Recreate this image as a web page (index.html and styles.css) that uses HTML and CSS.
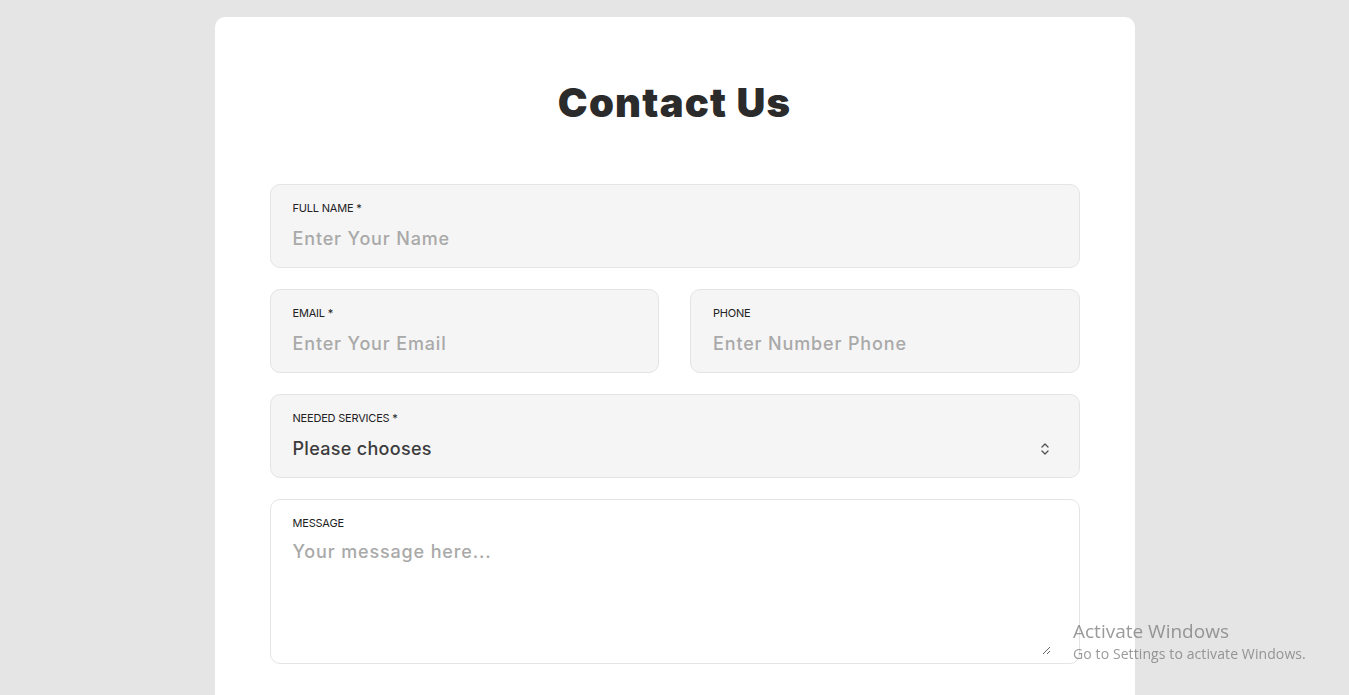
FILE: index.html
```html
<!DOCTYPE html>
<html lang="en">
<head>
<meta charset="utf-8">
<title>Contact Us</title>
<link rel="stylesheet" href="styles.css">
</head>
<body>
<main class="card">
  <h1 class="title">Contact Us</h1>
  <form class="form">
    <label class="field field-wide">
      <span class="field-label">FULL NAME *</span>
      <input class="field-input" type="text" placeholder="Enter Your Name">
    </label>
    <label class="field">
      <span class="field-label">EMAIL *</span>
      <input class="field-input" type="email" placeholder="Enter Your Email">
    </label>
    <label class="field">
      <span class="field-label">PHONE</span>
      <input class="field-input" type="tel" placeholder="Enter Number Phone">
    </label>
    <label class="field field-wide field-select">
      <span class="field-label">NEEDED SERVICES *</span>
      <span class="select-row">
        <span class="select-value">Please chooses</span>
        <svg class="select-icon" width="10" height="14" viewBox="0 0 10 14" fill="none" stroke="#555" stroke-width="1.4" stroke-linecap="round" stroke-linejoin="round"><path d="M2 5 L5 2 L8 5"/><path d="M2 9 L5 12 L8 9"/></svg>
      </span>
    </label>
    <label class="field field-wide field-message">
      <span class="field-label">MESSAGE</span>
      <textarea class="field-textarea" placeholder="Your message here..."></textarea>
    </label>
  </form>
</main>
<div class="activate">
  <div class="activate-title">Activate Windows</div>
  <div class="activate-sub">Go to Settings to activate Windows.</div>
</div>
</body>
</html>
```
FILE: styles.css
```css
* { box-sizing: border-box; }
html, body { height: 100%; }
body {
  margin: 0;
  background: #e5e5e5;
  padding-top: 17px;
  overflow: hidden;
  font-family: Inter, "Noto Sans", sans-serif;
}
.card {
  width: 920px;
  margin: 0 auto;
  background: #fff;
  border-radius: 10px;
  padding: 63px 55px 40px;
  min-height: 700px;
}
.title {
  margin: 0 0 58px;
  text-align: center;
  font-family: Inter, sans-serif;
  font-weight: 900;
  font-size: 40px;
  line-height: 46px;
  color: #2b2b2b;
  letter-spacing: 1.2px;
}
.form {
  display: grid;
  grid-template-columns: 1fr 1fr;
  column-gap: 31px;
  row-gap: 21px;
}
.field {
  display: flex;
  flex-direction: column;
  background: #f5f5f5;
  border: 1px solid #e4e4e4;
  border-radius: 10px;
  padding: 15px 22px 16px;
}
.field-wide { grid-column: 1 / -1; }
.field-label {
  font-size: 11px;
  line-height: 16px;
  font-weight: 400;
  color: #222;
  letter-spacing: -0.2px;
}
.field-input, .select-value, .field-textarea {
  font-family: Inter, sans-serif;
  font-size: 18px;
  line-height: 24px;
  font-weight: 500;
  letter-spacing: 0.85px;
}
.field-input {
  margin-top: 11px;
  border: 0;
  padding: 0;
  background: transparent;
  outline: none;
  color: #333;
  height: 24px;
}
.field-input::placeholder, .field-textarea::placeholder { color: #a9a9a9; }
.select-row {
  margin-top: 11px;
  display: flex;
  align-items: center;
  justify-content: space-between;
  padding-right: 7px;
}
.select-value { color: #3c3c3c; letter-spacing: 0.3px; }
.field-message {
  background: #fff;
  padding-bottom: 8px;
  padding-right: 28px;
}
.field-textarea {
  margin-top: 9px;
  border: 0;
  padding: 0;
  outline: none;
  background: transparent;
  height: 115px;
  resize: vertical;
  color: #333;
}
.activate {
  position: fixed;
  left: 1073px;
  top: 619px;
  color: rgba(120, 120, 120, 0.75);
  font-family: "Open Sans", "Noto Sans", sans-serif;
  pointer-events: none;
}
.activate-title { font-size: 19px; line-height: 24px; }
.activate-sub { font-size: 14px; line-height: 20px; margin-top: 1px; letter-spacing: 0.1px; }
```
